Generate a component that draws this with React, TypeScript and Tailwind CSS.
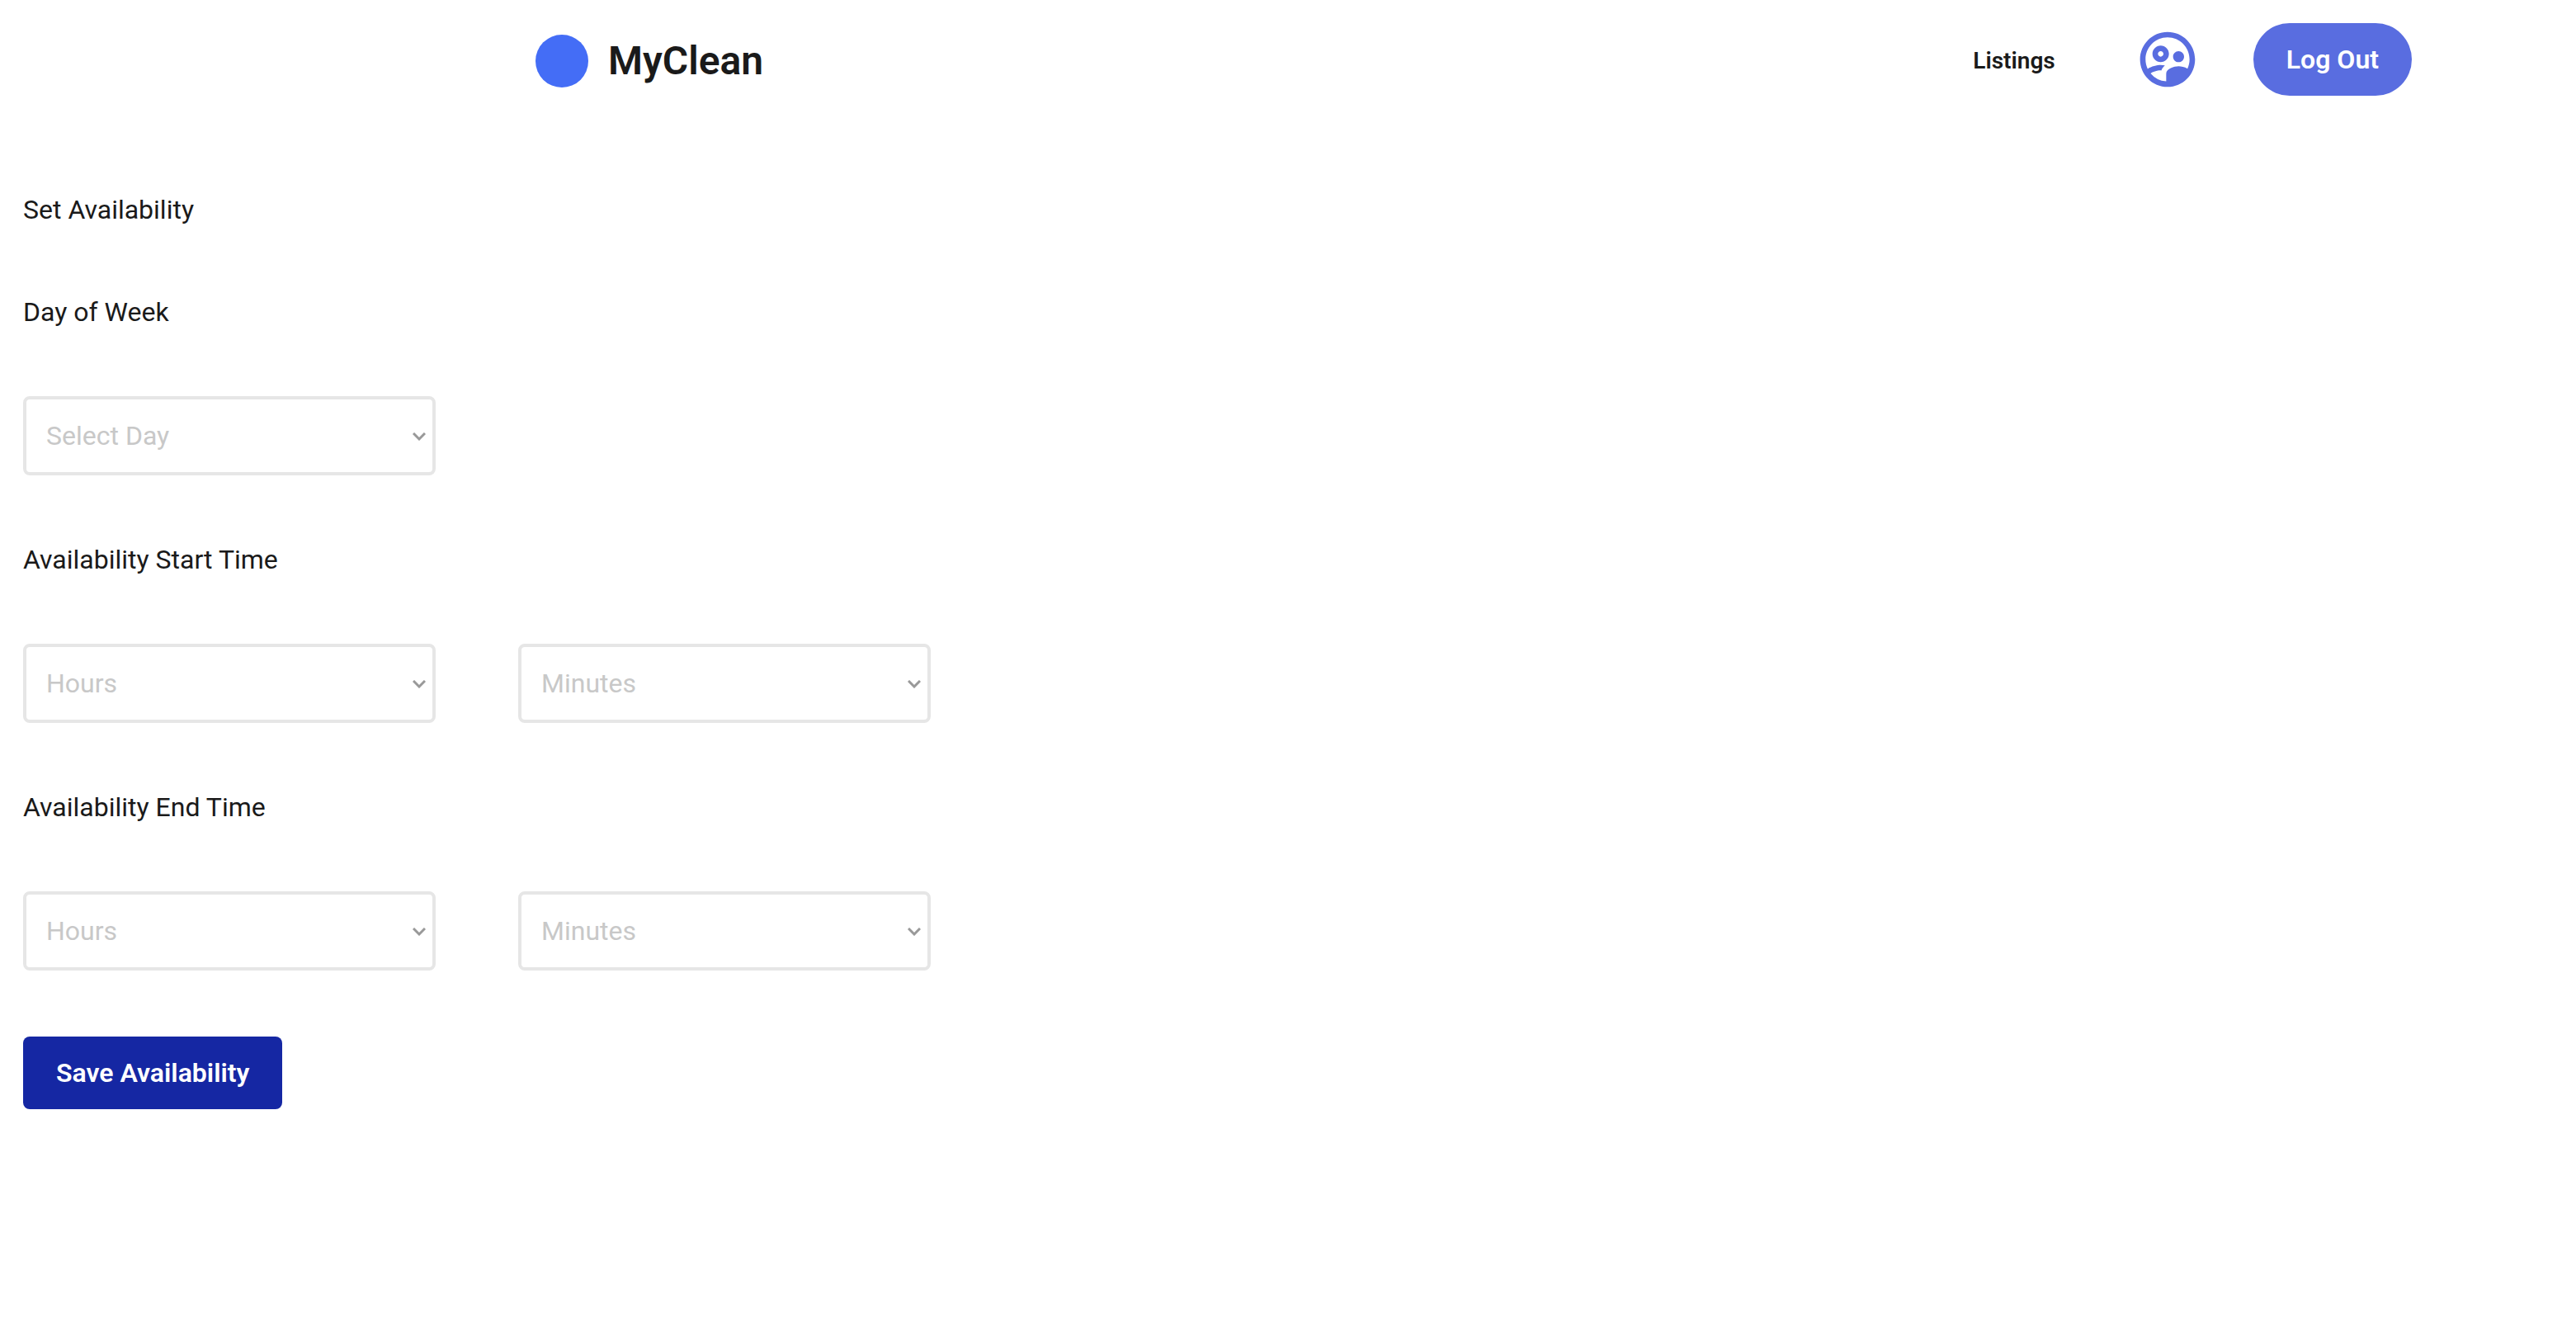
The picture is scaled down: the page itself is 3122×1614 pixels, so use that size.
import { MdOutlineSupervisedUserCircle } from "react-icons/md";

const days = ["Monday", "Tuesday", "Wednesday", "Thursday", "Friday", "Saturday", "Sunday"];
const hours = Array.from({ length: 24 }, (_, i) => String(i).padStart(2, "0"));
const minutes = ["00", "15", "30", "45"];

type SelectProps = { id: string; label?: string; placeholder: string; options: string[] };

function SelectField({ id, label, placeholder, options }: SelectProps) {
  return (
    <div className="relative w-[500px]">
      <select
        id={id}
        aria-label={label}
        defaultValue=""
        className="block h-24 w-full appearance-none rounded-lg border-4 border-[#e6e6e6] bg-white px-6 text-[32px] text-[#c8c8c8]"
      >
        <option value="" disabled>
          {placeholder}
        </option>
        {options.map((o) => (
          <option key={o} value={o}>
            {o}
          </option>
        ))}
      </select>
      <svg
        viewBox="0 0 16 10"
        className="pointer-events-none absolute top-11 right-3 h-[10px] w-4"
        fill="none"
        stroke="#999999"
        strokeWidth="3"
        aria-hidden="true"
      >
        <path d="M1 1 L8 8 L15 1" />
      </svg>
    </div>
  );
}

function TimeRow({ id, label }: { id: string; label: string }) {
  return (
    <>
      <label htmlFor={`${id}-hours`}>{label}</label>
      <div className="flex flex-wrap gap-[100px]">
        <SelectField id={`${id}-hours`} placeholder="Hours" options={hours} />
        <SelectField id={`${id}-minutes`} label={`${label} minutes`} placeholder="Minutes" options={minutes} />
      </div>
    </>
  );
}

export default function App() {
  return (
    <div className="min-h-screen bg-white font-[Roboto,sans-serif] text-[#1a1a1a]">
      <header className="flex h-36 items-center justify-between pr-[199px] pl-[649px]">
        <a href="#home" className="flex items-center gap-6 pt-1">
          <span className="size-16 rounded-full bg-[#446df6]" />
          <span className="text-5xl font-semibold">MyClean</span>
        </a>
        <nav className="flex items-center">
          <a href="#listings" className="mr-24 pt-1 text-[28px] font-semibold">
            Listings
          </a>
          <a href="#profile" aria-label="Profile" className="mr-16 text-[#596de0]">
            <MdOutlineSupervisedUserCircle className="size-20" />
          </a>
          <button type="button" className="h-[88px] rounded-full bg-[#596de0] px-10 text-[32px] font-semibold text-white">
            Log Out
          </button>
        </nav>
      </header>

      <main className="px-7 pt-[88px] pb-20">
        <form className="flex flex-col items-start gap-20 text-[32px] leading-[44px]">
          <h1>Set Availability</h1>
          <label htmlFor="day">Day of Week</label>
          <SelectField id="day" placeholder="Select Day" options={days} />
          <TimeRow id="start" label="Availability Start Time" />
          <TimeRow id="end" label="Availability End Time" />
          <button type="button" className="h-[88px] rounded-lg bg-[#1527a3] px-10 font-semibold text-white">
            Save Availability
          </button>
        </form>
      </main>
    </div>
  );
}
